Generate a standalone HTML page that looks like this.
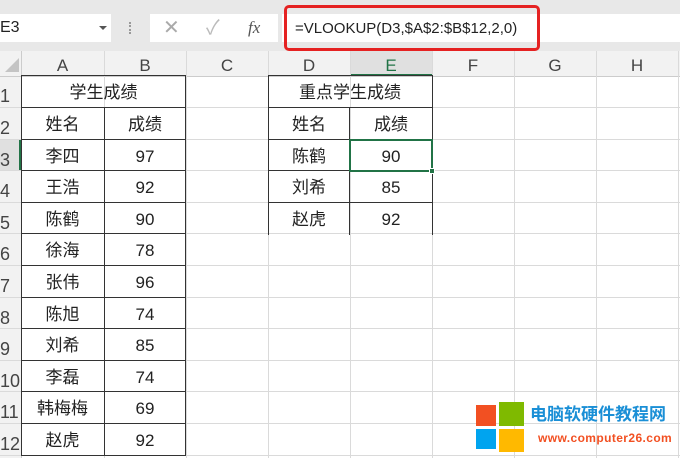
<!DOCTYPE html><html><head><meta charset="utf-8"><style>
*{margin:0;padding:0;box-sizing:border-box}
html,body{width:680px;height:458px;overflow:hidden}
body{background:#fff;position:relative;font-family:"Liberation Sans","Noto Sans CJK SC",sans-serif}
.a{position:absolute}
.t{position:absolute;text-align:center;font-size:17px;color:#222;line-height:31px}
.hl{position:absolute;background:#dadada;height:1px}
.vl{position:absolute;background:#dadada;width:1px}
.bk{position:absolute;background:#333}
.ch{position:absolute;top:53px;height:23px;text-align:center;font-size:17px;color:#444;line-height:26px}
.rh{position:absolute;left:0;width:21px;font-size:18px;color:#444;line-height:31px;text-align:left}
</style></head><body>
<div class="a" style="left:0;top:0;width:680px;height:51px;background:#e8e8e8"></div>
<div class="a" style="left:0;top:14px;width:111px;height:28px;background:#fff;font-size:16px;line-height:28px;color:#222">E3</div>
<div class="a" style="left:99px;top:26px;width:0;height:0;border-left:4px solid transparent;border-right:4px solid transparent;border-top:4px solid #555"></div>
<div class="a" style="left:129px;top:22px;width:2px;height:12px;border-left:2px dotted #999"></div>
<div class="a" style="left:150px;top:14px;width:128px;height:28px;background:#fff"></div>
<div class="a" style="left:163px;top:14px;font-size:20px;line-height:28px;color:#aaa">✕</div>
<div class="a" style="left:206px;top:14px;font-size:20px;line-height:28px;color:#bbb">✓</div>
<div class="a" style="left:248px;top:14px;font-size:17px;line-height:28px;color:#555;font-style:italic;font-family:'Liberation Serif',serif">fx</div>
<div class="a" style="left:282px;top:14px;width:398px;height:28px;background:#fff"></div>
<div class="a" style="left:284px;top:5px;width:256px;height:46px;border:3px solid #e52222;border-radius:5px"></div>
<div class="a" style="left:295px;top:14px;font-size:15px;line-height:30px;color:#222">=VLOOKUP(D3,$A$2:$B$12,2,0)</div>
<div class="a" style="left:0;top:51px;width:680px;height:25px;background:#f2f2f2"></div>
<div class="a" style="left:0;top:76px;width:21px;height:382px;background:#f2f2f2"></div>
<div class="a" style="left:350px;top:51px;width:82px;height:25px;background:#e0e0e0;border-bottom:2px solid #217346"></div>
<div class="a" style="left:0;top:139px;width:21px;height:32px;background:#e0e0e0;border-right:2px solid #217346"></div>
<div class="a" style="left:5px;top:58px;width:0;height:0;border-left:14px solid transparent;border-bottom:14px solid #c4c4c4"></div>
<div class="hl" style="left:0;top:76px;width:680px;background:#ccc"></div>
<div class="vl" style="left:21px;top:51px;height:407px;background:#ccc"></div>
<div id="g"></div>
<script>
var g='',cols=[21,104,186,268,350,432,514,596,678],L='ABCDEFGH';
for(var i=1;i<cols.length;i++){g+='<div class="vl" style="left:'+cols[i]+'px;top:51px;height:407px"></div>';}
for(var i=0;i<8;i++){g+='<div class="ch" style="left:'+cols[i]+'px;width:'+(cols[i+1]-cols[i])+'px;'+(i==4?'color:#217346':'')+'">'+L[i]+'</div>';}
function ry(r){return 75.4+(r-1)*31.6}
for(var r=1;r<=12;r++){g+='<div class="hl" style="left:0;top:'+Math.round(ry(r+1))+'px;width:680px"></div>';}
for(var r=1;r<=12;r++){g+='<div class="rh" style="top:'+Math.round(ry(r)+6)+'px">'+r+'</div>';}
var A=['姓名','李四','王浩','陈鹤','徐海','张伟','陈旭','刘希','李磊','韩梅梅','赵虎'],B=['成绩','97','92','90','78','96','74','85','74','69','92'];
function cell(x,w,r,t){g+='<div class="t" style="left:'+x+'px;width:'+w+'px;top:'+Math.round(ry(r)+2)+'px">'+t+'</div>';}
cell(21,165,1,'学生成绩');
for(var i=0;i<11;i++){cell(21,83,i+2,A[i]);cell(104,82,i+2,B[i]);}
cell(268,164,1,'重点学生成绩');
var D=['姓名','陈鹤','刘希','赵虎'],E=['成绩','90','85','92'];
for(var i=0;i<4;i++){cell(268,82,i+2,D[i]);cell(350,82,i+2,E[i]);}
function bx(x1,y1,x2,y2){g+='<div class="bk" style="left:'+x1+'px;top:'+y1+'px;width:'+(x2-x1+1)+'px;height:1px"></div>';}
function by(x,y1,y2){g+='<div class="bk" style="left:'+x+'px;top:'+y1+'px;width:1px;height:'+(y2-y1+1)+'px"></div>';}
for(var r=1;r<=13;r++){bx(21,Math.round(ry(r)),185,Math.round(ry(r)));}
by(21,76,455);by(185,76,455);by(104,107,455);
for(var r=1;r<=5;r++){bx(268,Math.round(ry(r)),432,Math.round(ry(r)));}
by(268,76,234);by(432,76,234);by(349,107,234);
document.getElementById('g').innerHTML=g;
</script>
<div class="a" style="left:349px;top:139px;width:84px;height:33px;border:2px solid #217346"></div>
<div class="a" style="left:429px;top:168px;width:6px;height:6px;background:#217346;border:1px solid #fff"></div>
<div class="a" style="left:476px;top:405px;width:20px;height:21px;background:#f25022"></div>
<div class="a" style="left:499px;top:402px;width:25px;height:24px;background:#7fba00"></div>
<div class="a" style="left:476px;top:429px;width:20px;height:20px;background:#00a4ef"></div>
<div class="a" style="left:499px;top:429px;width:25px;height:23px;background:#ffb900"></div>
<div class="a" style="left:530px;top:404px;font-size:17px;font-weight:bold;color:#1a8fd6;line-height:22px">电脑软硬件教程网</div>
<div class="a" style="left:538px;top:431px;font-size:12px;font-weight:bold;color:#f25022;line-height:15px;letter-spacing:0.4px">www.computer26.com</div>
</body></html>
